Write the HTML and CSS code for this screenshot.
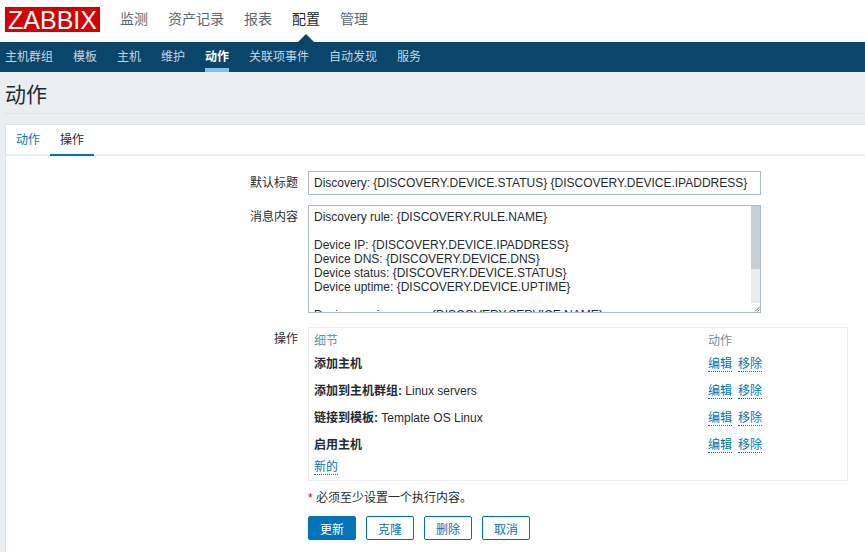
FILE: index.html
```html
<!DOCTYPE html>
<html lang="zh">
<head>
<meta charset="utf-8">
<title>动作</title>
<link rel="stylesheet" href="styles.css">
</head>
<body>
<header class="top">
  <div class="logo">ZABBIX</div>
  <nav class="main-nav">
    <a>监测</a><a>资产记录</a><a>报表</a><a class="current">配置</a><a>管理</a>
  </nav>
</header>
<nav class="sub-nav">
  <a>主机群组</a><a>模板</a><a>主机</a><a>维护</a><a class="current">动作</a><a>关联项事件</a><a>自动发现</a><a>服务</a>
</nav>
<main class="page">
  <h1 class="title">动作</h1>
  <section class="card">
    <div class="tabs"><a class="tab">动作</a><a class="tab active">操作</a></div>
    <form class="form">
      <label class="lbl">默认标题</label>
      <input class="field" type="text" value="Discovery: {DISCOVERY.DEVICE.STATUS} {DISCOVERY.DEVICE.IPADDRESS}">
      <label class="lbl">消息内容</label>
      <div class="area-wrap">
        <textarea class="area" spellcheck="false">Discovery rule: {DISCOVERY.RULE.NAME}

Device IP: {DISCOVERY.DEVICE.IPADDRESS}
Device DNS: {DISCOVERY.DEVICE.DNS}
Device status: {DISCOVERY.DEVICE.STATUS}
Device uptime: {DISCOVERY.DEVICE.UPTIME}

Device service name: {DISCOVERY.SERVICE.NAME}
Device service port: {DISCOVERY.SERVICE.PORT}
Device service status: {DISCOVERY.SERVICE.STATUS}
Device service uptime: {DISCOVERY.SERVICE.UPTIME}</textarea>
        <div class="scrollbar">
          <div class="thumb"></div>
          <div class="track"></div>
          <svg class="grip" width="9" height="9" viewBox="0 0 9 9"><path d="M4 8.5 8.5 4M6.5 8.5 8.5 6.5" stroke="#666" stroke-width="1" fill="none"/></svg>
        </div>
      </div>
      <label class="lbl lbl-ops">操作</label>
      <div class="ops">
        <table class="ops-table">
          <thead><tr><th>细节</th><th class="col-act">动作</th></tr></thead>
          <tbody>
            <tr><td><b>添加主机</b></td><td><a class="link">编辑</a><a class="link">移除</a></td></tr>
            <tr><td><b>添加到主机群组:</b> Linux servers</td><td><a class="link">编辑</a><a class="link">移除</a></td></tr>
            <tr><td><b>链接到模板:</b> Template OS Linux</td><td><a class="link">编辑</a><a class="link">移除</a></td></tr>
            <tr><td><b>启用主机</b></td><td><a class="link">编辑</a><a class="link">移除</a></td></tr>
          </tbody>
        </table>
        <div class="new-row"><a class="link">新的</a></div>
      </div>
      <p class="note"><span class="star">*</span> 必须至少设置一个执行内容。</p>
      <div class="buttons">
        <button class="btn primary" type="button">更新</button>
        <button class="btn" type="button">克隆</button>
        <button class="btn" type="button">删除</button>
        <button class="btn" type="button">取消</button>
      </div>
    </form>
  </section>
</main>
</body>
</html>
```

FILE: styles.css
```css
html, body {
  margin: 0;
  height: 552px;
  overflow: hidden;
}
body {
  background: #ebeef0;
  color: #1f2c33;
  font: 12px/14px "Liberation Sans", "Noto Sans CJK SC", sans-serif;
}
.top {
  height: 42px;
  background: #fff;
  display: flex;
  padding-left: 5px;
  box-sizing: border-box;
}
.logo {
  width: 95px;
  height: 25px;
  margin-top: 7px;
  background: #d40000;
  color: #fff;
  font-size: 25px;
  line-height: 26px;
  text-align: center;
}
.main-nav {
  display: flex;
  gap: 20px;
  margin-left: 20px;
  font-size: 14px;
  line-height: 18px;
  padding-top: 10px;
  color: #5b6a72;
}
.main-nav a { position: relative; height: 32px; }
.main-nav .current { color: #1f2c33; }
.main-nav .current::after {
  content: "";
  position: absolute;
  left: 6px;
  bottom: 0;
  border-left: 8px solid transparent;
  border-right: 8px solid transparent;
  border-bottom: 8px solid #0a466a;
}
.sub-nav {
  height: 30px;
  background: #0a466a;
  display: flex;
  gap: 20px;
  padding-left: 5px;
  color: #c3d6e2;
  line-height: 30px;
}
.sub-nav a { height: 30px; box-sizing: border-box; }
.sub-nav .current {
  color: #fff;
  font-weight: bold;
  border-bottom: 4px solid #7dc1ee;
}
.page { padding-left: 5px; }
.title {
  margin: 0 0 10px;
  height: 42px;
  box-sizing: border-box;
  border-bottom: 1px solid #dfe4e7;
  font-size: 21px;
  line-height: 30px;
  padding-top: 8px;
  font-weight: normal;
  color: #1f2c33;
}
.card {
  background: #fff;
  border: 1px solid #dfe4e7;
  border-right: 0;
  height: 440px;
}
.tabs {
  display: flex;
  height: 29px;
  border-bottom: 2px solid #ebeef0;
}
.tab {
  width: 44px;
  height: 31px;
  box-sizing: border-box;
  line-height: 30px;
  text-align: center;
  color: #0275b8;
}
.tab.active {
  color: #1f2c33;
  border-bottom: 2px solid #0275b8;
}
.form {
  display: grid;
  grid-template-columns: 292px 540px;
  column-gap: 10px;
  padding-top: 15px;
  margin: 0;
}
.lbl {
  text-align: right;
  line-height: 24px;
  color: #1f2c33;
}
.field {
  width: 453px;
  height: 24px;
  box-sizing: border-box;
  border: 1px solid #acbbc7;
  padding: 0 5px;
  margin: 0 0 10px;
  font: 12px "Liberation Sans", "Noto Sans CJK SC", sans-serif;
  color: #1f2c33;
  outline: 0;
}
.area-wrap {
  position: relative;
  width: 453px;
  height: 108px;
  margin-bottom: 14px;
}
.area {
  display: block;
  width: 100%;
  height: 100%;
  box-sizing: border-box;
  border: 1px solid #acbbc7;
  padding: 4px 5px;
  margin: 0;
  font: 12px/14px "Liberation Sans", "Noto Sans CJK SC", sans-serif;
  color: #1f2c33;
  resize: none;
  overflow: hidden;
  outline: 0;
  white-space: pre;
}
.scrollbar {
  position: absolute;
  top: 1px;
  right: 1px;
  bottom: 1px;
  width: 9px;
  display: flex;
  flex-direction: column;
}
.thumb {
  height: 63px;
  background: #c5d0d6;
}
.track {
  flex: 1;
  background: #ebebeb;
}
.grip {
  display: block;
  background: #fff;
}
.lbl-ops { line-height: 24px; }
.ops {
  width: 540px;
  height: 154px;
  box-sizing: border-box;
  border: 1px solid #ebeef0;
  padding: 3px 5px 0;
}
.ops-table {
  border-collapse: collapse;
  width: 100%;
  table-layout: fixed;
}
.ops-table th {
  font-weight: normal;
  color: #768d99;
  text-align: left;
  padding: 0;
  height: 19px;
}
.ops-table .col-act { width: 134px; }
.ops-table td {
  box-sizing: border-box;
  padding: 7px 0 0;
  height: 27px;
  vertical-align: top;
}
.link {
  display: inline-block;
  line-height: 13px;
  color: #0275b8;
  border-bottom: 1px dotted #0275b8;
  margin-right: 6px;
}
.new-row {
  line-height: 14px;
  margin-top: 2px;
}
.note {
  grid-column: 2;
  margin: 10px 0 11px;
}
.star { color: #dc0000; }
.buttons {
  grid-column: 2;
  display: flex;
  gap: 10px;
}
.btn {
  width: 48px;
  height: 24px;
  box-sizing: border-box;
  background: #fff;
  border: 1px solid #0275b8;
  border-radius: 2px;
  color: #0275b8;
  padding: 0;
  font: 12px "Liberation Sans", "Noto Sans CJK SC", sans-serif;
}
.btn.primary {
  background: #0275b8;
  color: #fff;
}
```
